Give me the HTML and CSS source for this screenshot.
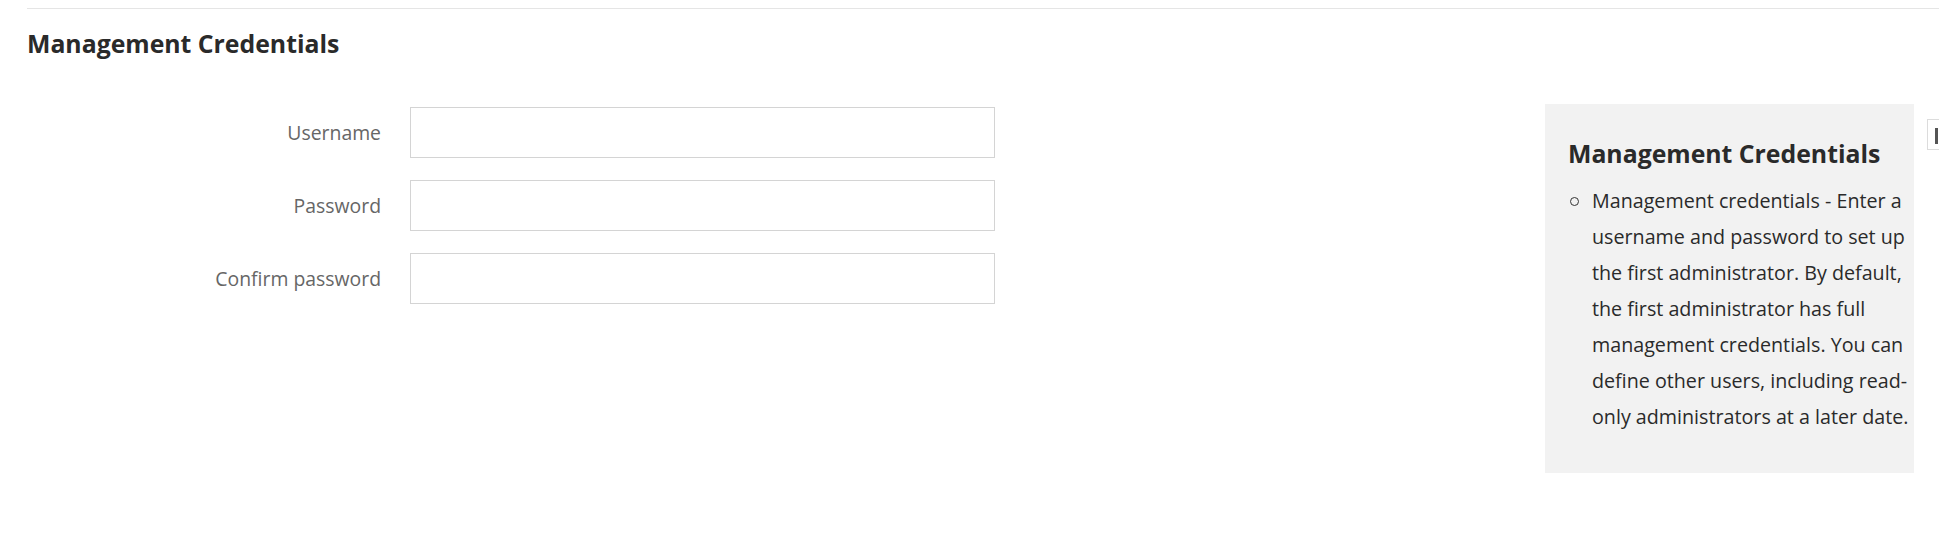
FILE: index.html
```html
<!DOCTYPE html>
<html lang="en">
<head>
<meta charset="utf-8">
<title>Management Credentials</title>
<link rel="stylesheet" href="styles.css">
</head>
<body>
<div class="page">
  <div class="section">
    <h2 class="title">Management Credentials</h2>
    <div class="content">
      <form class="form">
        <label class="label" for="username">Username</label>
        <input class="input" id="username" type="text">
        <label class="label" for="password">Password</label>
        <input class="input" id="password" type="password">
        <label class="label" for="confirm">Confirm password</label>
        <input class="input" id="confirm" type="password">
      </form>
      <aside class="help">
        <h3 class="help-title">Management Credentials</h3>
        <ul class="help-list">
          <li class="help-item">Management credentials - Enter a username and password to set up the first administrator. By default, the first administrator has full management credentials. You can define other users, including read-only administrators at a later date.</li>
        </ul>
      </aside>
      <div class="edge-btn"><span class="edge-bar"></span></div>
    </div>
  </div>
</div>
</body>
</html>
```
FILE: styles.css
```css
html, body {
  margin: 0;
  padding: 0;
  background: #fff;
}
body {
  font-family: "Open Sans", "Noto Sans", sans-serif;
  color: #292929;
  overflow: hidden;
}
.page {
  padding: 8px 0 0 27px;
}
.section {
  border-top: 1px solid #e5e5e5;
}
.title {
  margin: 0;
  padding-top: 18px;
  font-size: 24.8px;
  line-height: 32px;
  font-weight: 700;
  color: #2a2a2a;
}
.content {
  display: flex;
  align-items: flex-start;
  margin-top: 45px;
}
.form {
  display: grid;
  grid-template-columns: 354px 585px;
  column-gap: 29px;
  row-gap: 22px;
  margin-top: 3px;
}
.label {
  text-align: right;
  align-self: center;
  font-size: 19.4px;
  color: #666;
}
.input {
  box-sizing: border-box;
  height: 51px;
  border: 1px solid #d4d4d4;
  background: #fff;
  margin: 0;
  padding: 0 12px;
  font: inherit;
}
.help {
  margin-left: auto;
  width: 369px;
  height: 369px;
  box-sizing: border-box;
  background: #f2f2f2;
  padding: 33px 4px 0 23px;
}
.help-title {
  margin: 0;
  font-size: 24.8px;
  line-height: 32px;
  font-weight: 700;
  color: #2a2a2a;
}
.help-list {
  margin: 14px 0 0;
  padding-left: 24px;
  list-style: none;
  font-size: 19.7px;
  line-height: 36px;
  color: #2a2a2a;
}
.help-item {
  position: relative;
}
.help-item::before {
  content: "";
  position: absolute;
  left: -22px;
  top: 14px;
  width: 9px;
  height: 9px;
  box-sizing: border-box;
  border: 1.3px solid #333;
  border-radius: 50%;
}
.edge-btn {
  margin-left: 13px;
  margin-top: 15px;
  width: 12px;
  height: 31px;
  box-sizing: border-box;
  border: 1px solid #dcdcdc;
  border-right: 0;
  padding: 8px 0 0 7px;
  flex-shrink: 0;
}
.edge-bar {
  display: block;
  width: 3px;
  height: 16px;
  background: #555;
}
```
